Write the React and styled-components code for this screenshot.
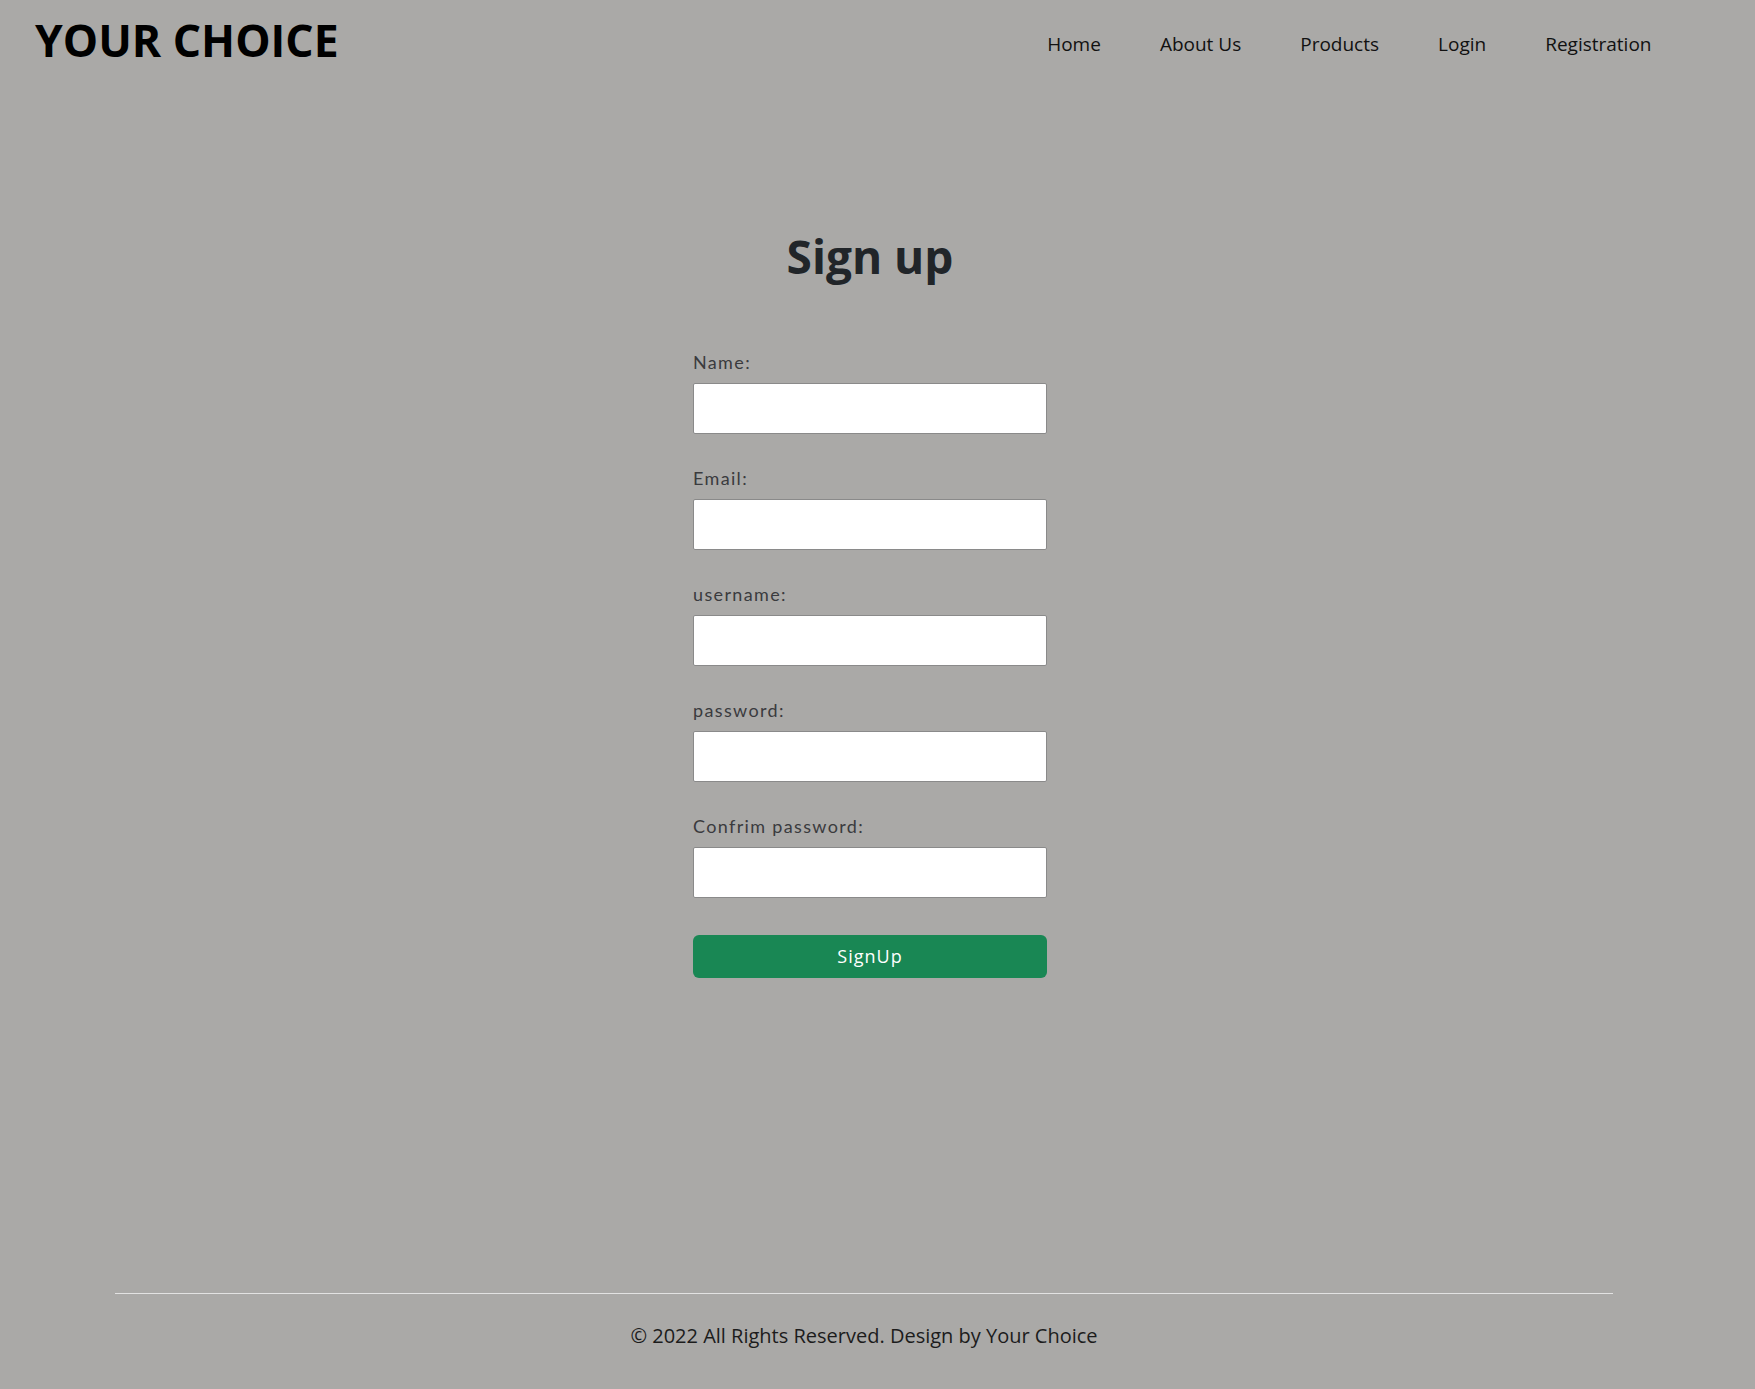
import React from 'react'
import styled, { createGlobalStyle } from 'styled-components'

const GlobalStyle = createGlobalStyle`
  body{
    margin:0;
    background:#aaa9a7;
    font-family:"Open Sans", "Noto Sans", sans-serif;
  }
  *{ box-sizing:border-box; }
`;

const Page = styled.div`
  min-height:100vh;
  display:flex;
  flex-direction:column;
`;

const Header = styled.header`
  display:flex;
  justify-content:space-between;
  align-items:flex-start;
  padding:12px 74px 0 35px;
`;

const Logo = styled.h1`
  margin:0;
  font-size:44.5px;
  font-weight:700;
  color:#000;
  line-height:56px;
`;

const Nav = styled.ul`
  display:flex;
  list-style:none;
  margin:0;
  padding:18px 0 0;
`;

const NavItem = styled.li`
  padding:0 29.5px;
  font-size:19px;
  line-height:28px;
  color:#111;
`;

const Main = styled.main`
  flex:1;
  display:flex;
  flex-direction:column;
  align-items:center;
  padding-right:15px;
`;

const Title = styled.h2`
  margin:156px 0 62px;
  font-size:46px;
  font-weight:700;
  color:#212529;
  line-height:64px;
`;

const Form = styled.form`
  width:354px;
`;

const Group = styled.div`
  margin-bottom:31.5px;
  &:last-of-type{ margin-bottom:37px; }
`;

const Label = styled.label`
  display:block;
  font-family:Lato, "Open Sans", sans-serif;
  font-size:18px;
  line-height:24px;
  letter-spacing:1.35px;
  color:#3a3b3e;
  margin-bottom:9.4px;
`;

const Input = styled.input`
  display:block;
  width:100%;
  height:51px;
  background:#fff;
  border:1px solid #8a8a8a;
  border-radius:2px;
  padding:0 12px;
  font-size:16px;
  outline:none;
`;

const SubmitButton = styled.button`
  display:block;
  width:100%;
  height:43px;
  border:none;
  border-radius:6px;
  background:#198754;
  color:#fff;
  font-family:"Open Sans", sans-serif;
  font-size:18px;
  letter-spacing:1px;
  cursor:pointer;
`;

const Footer = styled.footer`
  padding-bottom:39px;
`;

const Rule = styled.hr`
  margin:0 142px 0 115px;
  border:none;
  border-top:1.5px solid #e2e2e2;
`;

const Copyright = styled.p`
  margin:28px 0 0;
  padding-right:27px;
  text-align:center;
  font-size:20px;
  line-height:28px;
  color:#1c1c1c;
`;

const fields = [
  { id: 'name', label: 'Name:', type: 'text' },
  { id: 'email', label: 'Email:', type: 'email' },
  { id: 'username', label: 'username:', type: 'text' },
  { id: 'password', label: 'password:', type: 'password' },
  { id: 'confirm', label: 'Confrim password:', type: 'password' },
];

const links = ['Home', 'About Us', 'Products', 'Login', 'Registration'];

const App = () => {
  return (
    <Page>
      <GlobalStyle />
      <Header>
        <Logo>YOUR CHOICE</Logo>
        <Nav>
          {links.map(link => <NavItem key={link}>{link}</NavItem>)}
        </Nav>
      </Header>
      <Main>
        <Title>Sign up</Title>
        <Form onSubmit={e => e.preventDefault()}>
          {fields.map(f => (
            <Group key={f.id}>
              <Label htmlFor={f.id}>{f.label}</Label>
              <Input id={f.id} type={f.type} />
            </Group>
          ))}
          <SubmitButton type="submit">SignUp</SubmitButton>
        </Form>
      </Main>
      <Footer>
        <Rule />
        <Copyright>© 2022 All Rights Reserved. Design by Your Choice</Copyright>
      </Footer>
    </Page>
  )
}

export default App
